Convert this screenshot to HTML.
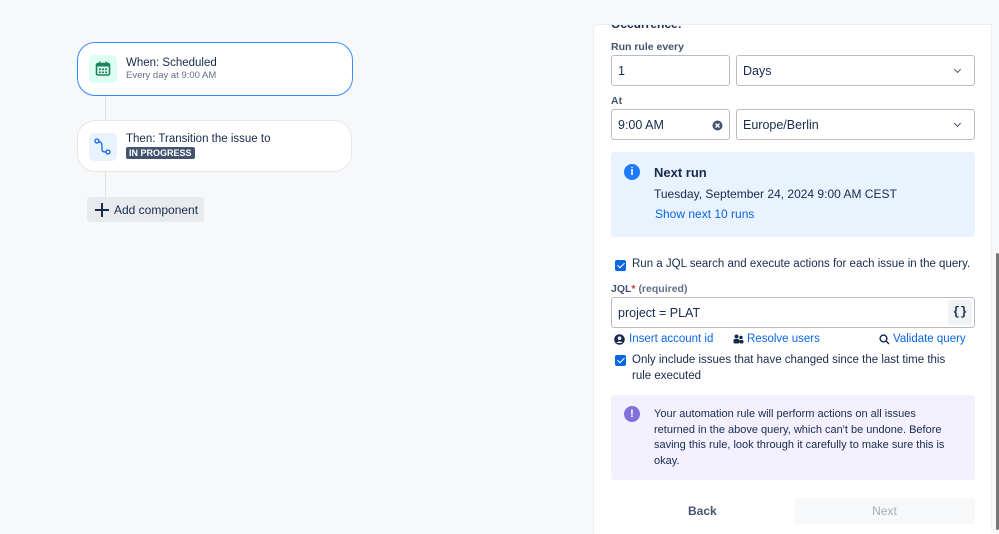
<!DOCTYPE html><html><head><style>
*{box-sizing:border-box;margin:0;padding:0}
body{width:999px;height:530px;overflow:hidden;background:#f7f8f9;font-family:"Liberation Sans",sans-serif;color:#172b4d;position:relative}
.a{position:absolute}
.card{position:absolute;background:#fff;border-radius:18px;border:1px solid #e4e6ea}
.inp{position:absolute;border:1px solid #b8bcc4;border-radius:3px;background:#fff;font-size:12.5px;padding-left:6px;display:flex;align-items:center;height:31px}
.lbl{position:absolute;font-size:10.5px;color:#44546f;font-weight:bold}
.chev{position:absolute;right:14px;top:11px;width:5px;height:5px;border-right:1.6px solid #44546f;border-bottom:1.6px solid #44546f;transform:rotate(45deg)}
.cb{position:absolute;width:11px;height:11px;background:#0c66e4;border-radius:2px}
.cb:after{content:"";position:absolute;left:3.5px;top:1px;width:3px;height:6px;border-right:1.6px solid #fff;border-bottom:1.6px solid #fff;transform:rotate(45deg)}
.link{color:#0c66e4;font-size:11.5px;position:absolute}
</style></head><body>
<div class="a" style="left:105px;top:95px;width:1px;height:105px;background:#dcdfe4"></div>
<div class="card" style="left:77px;top:42px;width:276px;height:54px;border:1.5px solid #388bff"></div>
<div class="a" style="left:89px;top:55px;width:28px;height:28px;background:#dcfff1;border-radius:5px"></div>
<svg class="a" style="left:95px;top:61px" width="16" height="16" viewBox="0 0 16 16"><rect x="1.5" y="2.5" width="13" height="11.5" rx="1.5" fill="none" stroke="#1f845a" stroke-width="1.6"/><rect x="1.5" y="2.5" width="13" height="3" fill="#1f845a"/><rect x="4" y="0.5" width="1.5" height="3" fill="#1f845a"/><rect x="10.5" y="0.5" width="1.5" height="3" fill="#1f845a"/><g fill="#1f845a"><rect x="4" y="7.5" width="2" height="1.6"/><rect x="7" y="7.5" width="2" height="1.6"/><rect x="10" y="7.5" width="2" height="1.6"/><rect x="4" y="10.5" width="2" height="1.6"/><rect x="7" y="10.5" width="2" height="1.6"/><rect x="10" y="10.5" width="2" height="1.6"/></g></svg>
<div class="a" style="left:126px;top:57px;font-size:11.5px">When: Scheduled</div>
<div class="a" style="left:126px;top:70px;font-size:9.5px;color:#626f86">Every day at 9:00 AM</div>
<div class="card" style="left:77px;top:120px;width:275px;height:52px"></div>
<div class="a" style="left:89px;top:133px;width:28px;height:28px;background:#e9f2ff;border-radius:5px"></div>
<svg class="a" style="left:94px;top:138px" width="18" height="18" viewBox="0 0 18 18"><circle cx="3" cy="3" r="2" fill="none" stroke="#0c66e4" stroke-width="1.3"/><circle cx="14" cy="14" r="2" fill="none" stroke="#0c66e4" stroke-width="1.3"/><path d="M5 3.5Q8 4 8 8V12Q8 14 12 14" fill="none" stroke="#0c66e4" stroke-width="1.3"/></svg>
<div class="a" style="left:126px;top:133px;font-size:11.5px">Then: Transition the issue to</div>
<div class="a" style="left:126px;top:147px;font-size:9px;font-weight:bold;color:#fff;background:#44546f;padding:1px 3px;border-radius:2px">IN PROGRESS</div>
<div class="a" style="left:87px;top:197px;width:117px;height:25px;background:#e8eaee;border-radius:3px"></div>
<div class="a" style="left:95px;top:209px;width:14px;height:1.6px;background:#172b4d"></div>
<div class="a" style="left:101.2px;top:203px;width:1.6px;height:14px;background:#172b4d"></div>
<div class="a" style="left:114px;top:203px;font-size:12px">Add component</div>

<div class="a" style="left:593px;top:24px;width:398px;height:510px;background:#fff;border-left:1px solid #eceef1;border-top:1px solid #eceef1;border-radius:4px 0 0 0"></div>
<div class="a" style="left:991px;top:24px;width:8px;height:506px;background:#f7f8f9;border-left:1px solid #eceef1"></div>
<div class="a" style="left:996px;top:253px;width:3px;height:277px;background:#777;border-radius:2px"></div>
<div class="a" style="left:611px;top:25px;height:7px;overflow:hidden;width:100px"><div style="font-size:12px;font-weight:bold;margin-top:-8px">Occurrence:</div></div>
<div class="lbl" style="left:611px;top:41px">Run rule every</div>
<div class="inp" style="left:611px;top:55px;width:119px">1</div>
<div class="inp" style="left:736px;top:55px;width:239px">Days<span class="chev"></span></div>
<div class="lbl" style="left:611px;top:95px">At</div>
<div class="inp" style="left:611px;top:109px;width:119px">9:00 AM<svg class="a" style="right:6px;top:10px" width="11" height="11" viewBox="0 0 11 11"><circle cx="5.5" cy="5.5" r="5" fill="#44546f"/><path d="M3.5 3.5L7.5 7.5M7.5 3.5L3.5 7.5" stroke="#fff" stroke-width="1.4"/></svg></div>
<div class="inp" style="left:736px;top:109px;width:239px">Europe/Berlin<span class="chev"></span></div>
<div class="a" style="left:611px;top:152px;width:364px;height:85px;background:#e9f2ff;border-radius:3px"></div>
<div class="a" style="left:624px;top:164px;width:16px;height:16px;border-radius:50%;background:#1d7afc;color:#fff;font-size:11px;font-weight:bold;text-align:center;line-height:16px">i</div>
<div class="a" style="left:654px;top:165px;font-size:13px;font-weight:bold">Next run</div>
<div class="a" style="left:654px;top:187px;font-size:12px">Tuesday, September 24, 2024 9:00 AM CEST</div>
<div class="link" style="left:655px;top:207px;font-size:12px">Show next 10 runs</div>
<div class="cb" style="left:615px;top:260px"></div>
<div class="a" style="left:632px;top:258px;font-size:11.5px">Run a JQL search and execute actions for each issue in the query.</div>
<div class="lbl" style="left:611px;top:283px">JQL<span style="color:#c9372c">*</span> <span style="color:#626f86">(required)</span></div>
<div class="inp" style="left:611px;top:297px;width:364px;height:31px">project = PLAT<div class="a" style="right:2px;top:2px;width:24px;height:25px;background:#f1f2f4;border-radius:3px;font-size:12px;font-weight:bold;text-align:center;line-height:25px;font-family:'Liberation Mono',monospace">{}</div></div>
<svg class="a" style="left:614px;top:334px" width="11" height="11" viewBox="0 0 11 11"><circle cx="5.5" cy="5.5" r="5.3" fill="#172b4d"/><circle cx="5.5" cy="4.2" r="1.8" fill="#fff"/><path d="M2.5 9Q5.5 5.8 8.5 9" fill="#fff"/></svg>
<div class="link" style="left:629px;top:333px">Insert account id</div>
<svg class="a" style="left:733px;top:334px" width="11" height="10" viewBox="0 0 11 10"><circle cx="3.5" cy="2.5" r="2" fill="#172b4d"/><circle cx="8" cy="3.5" r="1.7" fill="#172b4d"/><rect x="0.5" y="5" width="6" height="4.5" rx="1.5" fill="#172b4d"/><rect x="6.5" y="6" width="4" height="3.5" rx="1.2" fill="#172b4d"/></svg>
<div class="link" style="left:747px;top:333px">Resolve users</div>
<svg class="a" style="left:879px;top:334px" width="11" height="11" viewBox="0 0 11 11"><circle cx="4.5" cy="4.5" r="3.4" fill="none" stroke="#172b4d" stroke-width="1.4"/><path d="M7 7L10 10" stroke="#172b4d" stroke-width="1.4"/></svg>
<div class="link" style="left:893px;top:333px">Validate query</div>
<div class="cb" style="left:615px;top:355px"></div>
<div class="a" style="left:632px;top:352px;font-size:11.5px;line-height:16px;width:330px">Only include issues that have changed since the last time this rule executed</div>
<div class="a" style="left:611px;top:395px;width:364px;height:85px;background:#f3f0ff;border-radius:3px"></div>
<div class="a" style="left:624px;top:406px;width:16px;height:16px;border-radius:50%;background:#8270db;color:#fff;font-size:11px;font-weight:bold;text-align:center;line-height:16px">!</div>
<div class="a" style="left:654px;top:407px;font-size:11px;line-height:15.5px;width:305px">Your automation rule will perform actions on all issues returned in the above query, which can't be undone. Before saving this rule, look through it carefully to make sure this is okay.</div>
<div class="a" style="left:688px;top:504px;font-size:12px;font-weight:bold;color:#44546f">Back</div>
<div class="a" style="left:794px;top:498px;width:181px;height:26px;background:#f7f8f9;border-radius:3px;color:#a5adba;font-size:12px;text-align:center;line-height:26px">Next</div>
</body></html>
